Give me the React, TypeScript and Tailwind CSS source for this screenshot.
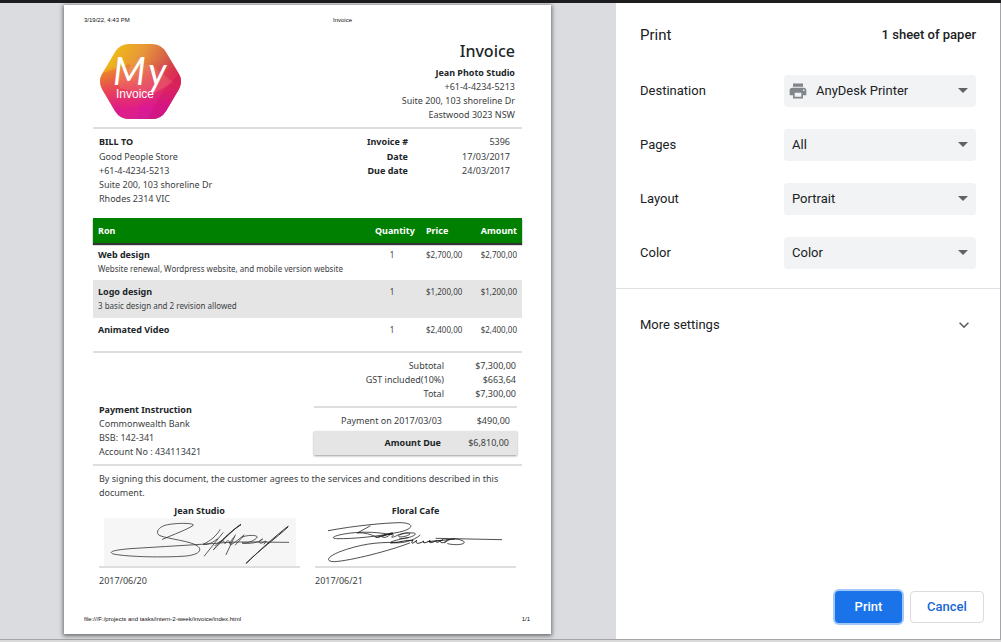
import { ReactNode } from 'react';
import { MdArrowDropDown, MdExpandMore, MdPrint } from 'react-icons/md';

function Logo() {
  return (
    <svg className="ml-[7px] h-[75px] w-[81px]" viewBox="0 0 81 75" role="img" aria-label="My Invoice">
      <defs>
        <linearGradient id="warm" x1="0" y1="0" x2="1" y2="0.55">
          <stop offset="0" stopColor="#f2d000" />
          <stop offset="0.45" stopColor="#e8963a" />
          <stop offset="0.75" stopColor="#d2544a" />
          <stop offset="1" stopColor="#cc1230" />
        </linearGradient>
        <linearGradient id="pink" x1="0" y1="0" x2="0.12" y2="1">
          <stop offset="0.3" stopColor="#ea2a60" stopOpacity="0" />
          <stop offset="0.66" stopColor="#e62c6c" stopOpacity="0.8" />
          <stop offset="0.9" stopColor="#dc1892" />
          <stop offset="1" stopColor="#d51c96" />
        </linearGradient>
        <clipPath id="hex">
          <path d="M29 0H52Q61 0 66 8L79 30Q83 37 79 45L66 67Q61 75 52 75H29Q20 75 15 67L2 45Q-2 37 2 30L15 8Q20 0 29 0Z" />
        </clipPath>
      </defs>
      <g clipPath="url(#hex)">
        <path d="M0 0H81V75H0Z" fill="url(#warm)" />
        <path d="M0 30L30 20L22 75H0Z" fill="#e85a24" opacity="0.35" />
        <path d="M0 0H81V75H0Z" fill="url(#pink)" />
        <path d="M16 25L50 20L73 38L50 52L20 44Z" fill="#ffb08c" opacity="0.2" />
        <path d="M81 28L62 48L48 75H81Z" fill="#c40a52" opacity="0.25" />
        <path d="M20 46L31 36L44 50L36 75H20Z" fill="#f63b58" opacity="0.15" />
      </g>
      <text x="13" y="41" fill="#fff" className="font-['Lato',sans-serif] text-[38px] italic">
        M<tspan dx="3">y</tspan>
      </text>
      <text x="16" y="54" fill="#fff" className="font-['Liberation_Sans',sans-serif] text-[12px]">Invoice</text>
    </svg>
  );
}

function JeanSignature() {
  return (
    <svg className="mx-auto block h-12 w-[192px] bg-[#f6f6f6]" viewBox="72 189 576 144" fill="none" stroke="#333" strokeWidth="2.4" strokeLinecap="round" strokeLinejoin="round" role="img" aria-label="Signature of Jean Studio">
      <path d="M247 253C280 239 325 222 340 211C342 203 290 204 263 209C232 215 225 236 240 242C264 252 335 258 354 274C368 287 354 299 319 303C254 308 145 306 100 297C82 290 105 285 150 281C220 276 293 273 363 268L410 265C470 258 550 262 626 262" />
      <path d="M420 224C410 242 391 258 369 268C386 270 398 262 412 252M429 233L373 303M482 208C446 234 417 262 401 284M482 210C460 220 425 262 401 283M405 272C420 254 434 254 435 266C441 254 448 254 451 266M466 240L438 299M463 245C451 260 444 271 455 268C468 260 479 251 492 240M490 243L466 270M487 246C500 240 530 239 532 246C528 255 501 267 486 264C507 267 535 264 548 252C533 259 536 266 546 264C560 255 564 257 552 267" />
      <path d="M624 214C583 246 546 280 499 324M624 216C590 248 535 287 499 325M482 209C468 218 441 242 421 262" strokeWidth="3" />
    </svg>
  );
}

function FloralSignature() {
  return (
    <svg className="block h-12 w-full" viewBox="45 189 603 144" fill="none" stroke="#222" strokeWidth="2.4" strokeLinecap="round" strokeLinejoin="round" role="img" aria-label="Signature of Floral Cafe">
      <path d="M85 227C165 212 250 204 300 203C347 204 340 222 299 231C238 244 160 252 110 251C85 249 109 240 145 235C199 228 240 233 275 239" />
      <path d="M210 213L172 234C192 232 214 238 231 247C244 242 260 238 277 233C266 244 253 252 245 244C262 236 287 237 279 242C269 249 279 248 292 241C313 231 337 232 328 239C310 249 287 246 298 240C318 231 354 232 345 239C335 248 307 252 299 250M360 241C340 257 310 266 278 263C259 263 290 254 325 248M329 264C270 287 153 317 103 320C69 319 86 300 140 283C202 263 246 262 292 262" />
      <path d="M272 264C299 263 318 254 339 256C329 270 342 264 350 256C343 270 363 265 371 258C365 268 383 262 390 256C382 268 402 262 410 256C403 266 419 261 428 254C410 265 435 267 443 255M384 260L464 252M228 247C249 246 250 240 278 235" strokeWidth="3" />
      <path d="M408 250L605 254M434 263C449 249 469 249 490 258C503 269 465 272 443 266" />
    </svg>
  );
}

const items = [
  { name: 'Web design', note: 'Website renewal, Wordpress website, and mobile version website', price: '$2,700,00', row: 'h-[37px]' },
  { name: 'Logo design', note: '3 basic design and 2 revision allowed', price: '$1,200,00', row: 'h-[38px] bg-[#e5e5e5]' },
  { name: 'Animated Video', note: '', price: '$2,400,00', row: 'h-[33px]' },
];

function Rule() {
  return <hr className="border-t-2 border-[#dedede]" />;
}

function Invoice() {
  return (
    <article className="flex w-full max-w-[487px] flex-col bg-white font-['Noto_Sans',sans-serif] text-[9px] leading-[14px] text-[#3b3e42] shadow-[0_1px_4px_1px_rgba(0,0,0,0.5)]">
      <header className="grid grid-cols-3 px-5 pt-[11px] font-['Liberation_Sans',sans-serif] text-[6px] leading-2 text-[#111]">
        <span>3/19/22, 4:43 PM</span>
        <span className="pl-[100px]">Invoice</span>
      </header>
      <div className="px-[29px] pt-5">
        <section className="flex h-[83px] items-start justify-between pr-[7px]">
          <Logo />
          <address className="text-right not-italic">
            <h1 className="text-[16px] leading-[14px] font-medium text-[#212529]">Invoice</h1>
            <strong className="mt-2 block text-[#212529]">Jean Photo Studio</strong>
            +61-4-4234-5213<br />Suite 200, 103 shoreline Dr<br />Eastwood 3023 NSW
          </address>
        </section>
        <Rule />
        <section className="flex h-[89px] justify-between px-[6px] pt-[6px]">
          <address className="not-italic">
            <strong className="block pb-px text-[#212529]">BILL TO</strong>
            Good People Store<br />+61-4-4234-5213<br />Suite 200, 103 shoreline Dr<br />Rhodes 2314 VIC
          </address>
          <dl className="grid grid-cols-[auto_102px] content-start pr-[6px] text-right">
            <dt className="pb-px font-bold text-[#212529]">Invoice #</dt><dd>5396</dd>
            <dt className="font-bold text-[#212529]">Date</dt><dd>17/03/2017</dd>
            <dt className="font-bold text-[#212529]">Due date</dt><dd>24/03/2017</dd>
          </dl>
        </section>
        <table className="w-full table-fixed border-collapse">
          <thead className="bg-[#008000] text-white shadow-[0_2px_1px_#333]">
            <tr className="h-[25px] text-left">
              <th className="pl-[5px]">Ron</th>
              <th className="w-[51px]">Quantity</th>
              <th className="w-[45px]">Price</th>
              <th className="w-[51px] pr-[5px] text-right">Amount</th>
            </tr>
          </thead>
          <tbody className="text-[8px]">
            {items.map((item) => (
              <tr key={item.name} className={`${item.row} align-top`}>
                <td className="pt-[5px] pl-[5px]">
                  <strong className="block text-[9px] text-[#212529]">{item.name}</strong>
                  {item.note}
                </td>
                <td className="pt-[5px] pr-[17px] text-center">1</td>
                <td className="pt-[5px]">{item.price}</td>
                <td className="pt-[5px] pr-[5px] text-right">{item.price}</td>
              </tr>
            ))}
          </tbody>
        </table>
        <Rule />
        <section className="flex h-[111px] justify-between pt-[6px] pr-[5px] pl-[6px]">
          <address className="mt-auto pb-[5px] not-italic">
            <strong className="block text-[#212529]">Payment Instruction</strong>
            Commonwealth Bank<br />BSB: 142-341<br />Account No : 434113421
          </address>
          <div className="w-[203px]">
            <dl className="grid grid-cols-[1fr_72px] pr-px pb-[5px] text-right">
              <dt>Subtotal</dt><dd>$7,300,00</dd>
              <dt>GST included(10%)</dt><dd>$663,64</dd>
              <dt>Total</dt><dd>$7,300,00</dd>
            </dl>
            <Rule />
            <dl className="text-right">
              <div className="grid h-[23px] grid-cols-[1fr_68px] items-center pt-[2px] pr-[7px]">
                <dt>Payment on 2017/03/03</dt><dd>$490,00</dd>
              </div>
              <div className="grid h-6 grid-cols-[1fr_68px] items-center bg-[#e5e5e5] pr-2 shadow-[0_1px_2px_rgba(0,0,0,0.4)]">
                <dt className="font-bold text-[#212529]">Amount Due</dt><dd>$6,810,00</dd>
              </div>
            </dl>
          </div>
        </section>
        <Rule />
        <section className="px-[6px] pt-[6px]">
          <p className="pr-2">By signing this document, the customer agrees to the services and conditions described in this document.</p>
          <div className="grid grid-cols-2 gap-[15px] pt-1">
            <figure>
              <figcaption className="text-center font-bold text-[#212529]">Jean Studio</figcaption>
              <JeanSignature />
              <Rule />
              <p className="pt-[6px]">2017/06/20</p>
            </figure>
            <figure>
              <figcaption className="text-center font-bold text-[#212529]">Floral Cafe</figcaption>
              <FloralSignature />
              <Rule />
              <p className="pt-[6px]">2017/06/21</p>
            </figure>
          </div>
        </section>
      </div>
      <footer className="mt-auto flex justify-between pr-[21px] pb-[11px] pl-5 font-['Liberation_Sans',sans-serif] text-[6px] leading-2 text-[#111]">
        <span>file:///F:/projects and tasks/intern-2-week/invoice/index.html</span>
        <span>1/1</span>
      </footer>
    </article>
  );
}

type SettingProps = { id: string; label: string; value: string; icon?: ReactNode };

function Setting({ id, label, value, icon }: SettingProps) {
  return (
    <div className="flex items-center justify-between">
      <label htmlFor={id}>{label}</label>
      <div className="relative w-[192px]">
        {icon}
        <select id={id} className={`h-8 w-full appearance-none rounded bg-[#f1f3f4] pr-7 ${icon ? 'pl-8' : 'pl-2'}`}>
          <option>{value}</option>
        </select>
        <MdArrowDropDown className="pointer-events-none absolute top-[3px] right-px size-6 text-[#5f6368]" />
      </div>
    </div>
  );
}

export default function App() {
  return (
    <div className="flex min-h-screen flex-col bg-[#dadada] font-['Roboto',sans-serif] text-[13px] text-[#202124]">
      <div className="h-[3px] bg-[#1d1d1f]" />
      <div className="flex grow border-b border-[#a5a5a7]">
        <main className="flex grow justify-center bg-[#dadce0] pt-[2px] pr-px pb-[5px]">
          <Invoice />
        </main>
        <aside className="flex w-[385px] shrink-0 flex-col border-r border-[#a5a5a7] bg-white">
          <header className="flex h-[62px] items-center justify-between px-6 pt-[2px]">
            <h2 className="text-[15px]">Print</h2>
            <span className="font-medium">1 sheet of paper</span>
          </header>
          <div className="flex flex-col gap-[22px] border-b border-[#e0e0e0] px-6 pt-[10px] pb-[19px]">
            <Setting id="destination" label="Destination" value="AnyDesk Printer" icon={<MdPrint className="pointer-events-none absolute top-[6px] left-1 size-5 text-[#80868b]" />} />
            <Setting id="pages" label="Pages" value="All" />
            <Setting id="layout" label="Layout" value="Portrait" />
            <Setting id="color" label="Color" value="Color" />
          </div>
          <button type="button" className="flex h-[72px] items-center justify-between pr-[26px] pl-6">
            More settings
            <MdExpandMore className="size-5 text-[#5f6368]" />
          </button>
          <footer className="mt-auto flex justify-end gap-2 pr-4 pb-4 font-medium">
            <button type="button" className="h-8 w-[67px] rounded bg-[#1a73e8] text-white shadow-[0_0_0_2px_rgba(26,115,232,0.4)]">Print</button>
            <button type="button" className="h-8 w-[74px] rounded border border-[#dadce0] text-[#1967d2]">Cancel</button>
          </footer>
        </aside>
      </div>
      <div className="h-[2px]" />
    </div>
  );
}
